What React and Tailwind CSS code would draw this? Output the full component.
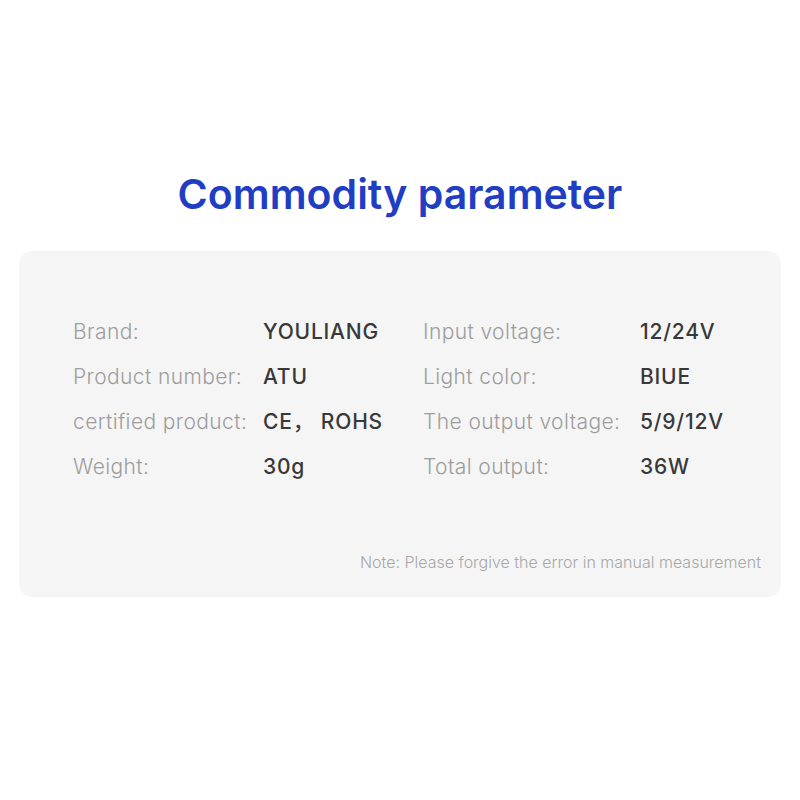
import React from 'react';

const rows = [
  ['Brand:', 'YOULIANG', 'Input voltage:', '12/24V'],
  ['Product number:', 'ATU', 'Light color:', 'BIUE'],
  ['certified product:', 'CE， ROHS', 'The output voltage:', '5/9/12V'],
  ['Weight:', '30g', 'Total output:', '36W'],
];

export default function App() {
  return (
    <div className="w-[800px] h-[800px] bg-white pt-[169px] font-['Inter','Noto_Sans_CJK_SC',sans-serif]">
      {/* Title */}
      <h1 className="text-center text-[41px] leading-[50px] font-semibold text-[#1f3ec4]">
        Commodity parameter
      </h1>

      {/* Parameter card */}
      <div className="mx-[19px] mt-[32px] rounded-[14px] bg-[#f5f5f5] pt-[58px] pb-[23px] pl-[54px] pr-[20px]">
        <div className="grid grid-cols-[190px_160px_217px_auto] text-[21px] leading-[45px]">
          {rows.map(([l1, v1, l2, v2]) => (
            <React.Fragment key={l1}>
              <span className="text-[#9d9d9d] font-light tracking-[0.4px] whitespace-nowrap">{l1}</span>
              <span className="text-[#383838] font-medium tracking-[0.8px] whitespace-nowrap">{v1}</span>
              <span className="text-[#9d9d9d] font-light tracking-[0.4px] whitespace-nowrap">{l2}</span>
              <span className="text-[#383838] font-medium tracking-[0.8px] whitespace-nowrap">{v2}</span>
            </React.Fragment>
          ))}
        </div>
        <p className="mt-[62px] text-right text-[16px] leading-[23px] font-light text-[#a8a8a8]">
          Note: Please forgive the error in manual measurement
        </p>
      </div>
    </div>
  );
}
